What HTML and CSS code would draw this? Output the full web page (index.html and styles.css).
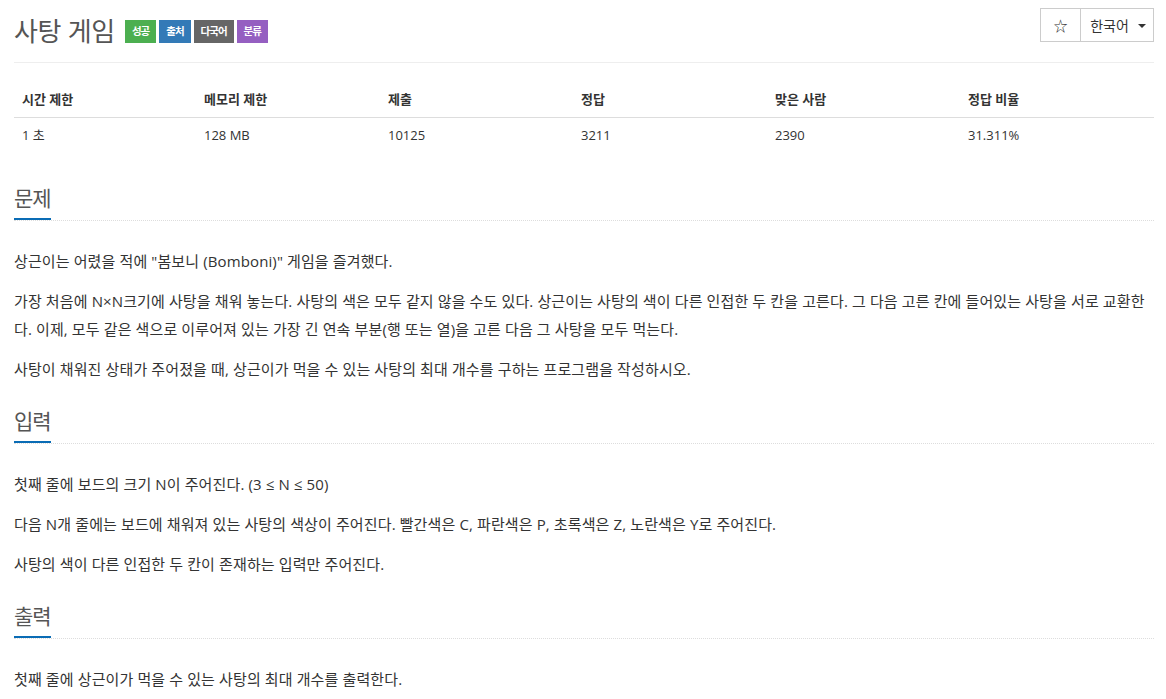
FILE: index.html
```html
<!DOCTYPE html>
<html lang="ko">
<head>
  <meta charset="utf-8" />
  <meta name="viewport" content="width=device-width, initial-scale=1.0" />
  <title>사탕 게임</title>
  <link rel="stylesheet" href="styles.css">
</head>
<body>
  <div class="page">

    <div class="page-header">
      <h1 class="title">
        <span class="title-text">사탕 게임</span>
        <span class="label label-green">성공</span>
        <span class="label label-blue">출처</span>
        <span class="label label-gray">다국어</span>
        <span class="label label-purple">분류</span>
      </h1>
      <div class="btn-group">
        <span class="btn btn-star">☆</span>
        <span class="btn btn-lang">한국어 <span class="caret"></span></span>
      </div>
    </div>

    <table class="info">
      <colgroup>
        <col style="width: 182px">
        <col style="width: 184px">
        <col style="width: 193px">
        <col style="width: 194px">
        <col style="width: 193px">
        <col style="width: 194px">
      </colgroup>
      <thead>
        <tr>
          <th>시간 제한</th>
          <th>메모리 제한</th>
          <th>제출</th>
          <th>정답</th>
          <th>맞은 사람</th>
          <th>정답 비율</th>
        </tr>
      </thead>
      <tbody>
        <tr>
          <td>1 초</td>
          <td>128 MB</td>
          <td>10125</td>
          <td>3211</td>
          <td>2390</td>
          <td>31.311%</td>
        </tr>
      </tbody>
    </table>

    <section class="problem-section first">
      <div class="headline"><h2>문제</h2></div>
      <p>상근이는 어렸을 적에 "봄보니 (Bomboni)" 게임을 즐겨했다.</p>
      <p>가장 처음에 N×N크기에 사탕을 채워 놓는다. 사탕의 색은 모두 같지 않을 수도 있다. 상근이는 사탕의 색이 다른 인접한 두 칸을 고른다. 그 다음 고른 칸에 들어있는 사탕을 서로 교환한다. 이제, 모두 같은 색으로 이루어져 있는 가장 긴 연속 부분(행 또는 열)을 고른 다음 그 사탕을 모두 먹는다.</p>
      <p>사탕이 채워진 상태가 주어졌을 때, 상근이가 먹을 수 있는 사탕의 최대 개수를 구하는 프로그램을 작성하시오.</p>
    </section>

    <section class="problem-section">
      <div class="headline"><h2>입력</h2></div>
      <p>첫째 줄에 보드의 크기 N이 주어진다. (3 ≤ N ≤ 50)</p>
      <p>다음 N개 줄에는 보드에 채워져 있는 사탕의 색상이 주어진다. 빨간색은 C, 파란색은 P, 초록색은 Z, 노란색은 Y로 주어진다.</p>
      <p>사탕의 색이 다른 인접한 두 칸이 존재하는 입력만 주어진다.</p>
    </section>

    <section class="problem-section">
      <div class="headline"><h2>출력</h2></div>
      <p>첫째 줄에 상근이가 먹을 수 있는 사탕의 최대 개수를 출력한다.</p>
    </section>

  </div>
</body>
</html>
```

FILE: styles.css
```css
body {
  margin: 0;
  font-family: "Open Sans", "Noto Sans CJK KR", sans-serif;
  color: #333;
  background: white;
}

.page {
  padding: 0 12px 0 14px;
}

.page-header {
  display: flex;
  justify-content: space-between;
  align-items: flex-start;
  padding-top: 8px;
  height: 54px;
  border-bottom: 1px solid #eee;
}

.title {
  display: flex;
  align-items: center;
  gap: 3px;
  margin: 0;
  height: 44px;
  font-weight: normal;
}

.title-text {
  font-size: 26px;
  letter-spacing: -0.3px;
  color: #555;
  margin-right: 7px;
}

.label {
  display: inline-block;
  font-size: 10.5px;
  letter-spacing: -1px;
  font-weight: bold;
  line-height: 23px;
  padding: 0 7px;
  color: white;
  margin-top: 3px;
}

.label-green  { background: #4caf50; }
.label-blue   { background: #337ab7; }
.label-gray   { background: #666; }
.label-purple { background: #955fc1; }

.btn-group {
  display: flex;
  border: 1px solid #ccc;
  height: 32px;
}

.btn {
  display: flex;
  align-items: center;
  justify-content: center;
  font-size: 14px;
  color: #333;
}

.btn-star {
  width: 39px;
  border-right: 1px solid #ccc;
  font-size: 14px;
}

.btn-lang {
  width: 70px;
  gap: 9px;
  padding-left: 2px;
}

.caret {
  width: 0;
  height: 0;
  border-left: 4px solid transparent;
  border-right: 4px solid transparent;
  border-top: 4px solid #333;
  margin-top: 2px;
}

table.info {
  width: 100%;
  table-layout: fixed;
  border-collapse: collapse;
  margin-top: 19px;
  font-size: 13px;
}

.info th {
  text-align: left;
  font-weight: bold;
  line-height: 20px;
  padding: 7px 8px 8px;
  border-bottom: 1px solid #ddd;
}

.info td {
  line-height: 20px;
  padding: 7px 8px;
}

.problem-section {
  margin-top: 23px;
}

.problem-section.first {
  margin-top: 31px;
}

.headline {
  border-bottom: 1px dotted #ddd;
  margin-bottom: 26px;
  height: 37px;
}

.headline h2 {
  display: inline-block;
  margin: 0;
  font-size: 21px;
  font-weight: normal;
  letter-spacing: -1px;
  line-height: 30px;
  padding-bottom: 5px;
  color: #555;
  border-bottom: 2px solid #0a6cb5;
}

.problem-section p {
  font-size: 15px;
  letter-spacing: 0.12px;
  line-height: 28px;
  margin: 0 0 12px;
}
```
